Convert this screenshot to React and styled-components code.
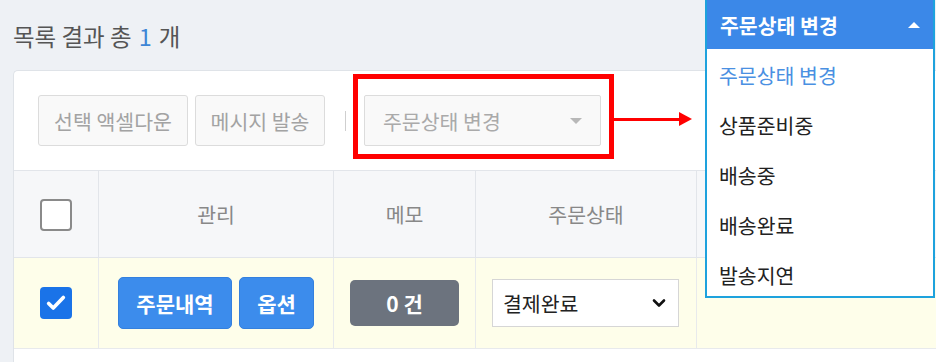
import React from "react";
import styled, { createGlobalStyle } from "styled-components";

const GlobalStyle = createGlobalStyle`
    body {
        margin:0;
        background:#eef1f5;
        font-family:"Noto Sans CJK KR", "Noto Sans", sans-serif;
        overflow:hidden;
    }
`;

const Page = styled.div`
    position:relative;
    width:936px;
    height:362px;
    overflow:hidden;
    padding-left:13px;
    box-sizing:border-box;
`;
const Title = styled.div`
    height:70px;
    display:flex;
    align-items:center;
    padding-top:2px;
    box-sizing:border-box;
    font-size:23.5px;
    color:#555;
`;
const Count = styled.span`
    color:#3d86d6;
    margin:0 7px;
`;
const Card = styled.div`
    width:1000px;
    background:#fff;
    border:1px solid #dfe3e8;
    border-right:none;
    border-radius:5px 0 0 0;
    padding-bottom:40px;
`;
const Toolbar = styled.div`
    display:flex;
    align-items:center;
    gap:7px;
    padding:24px 24px;
`;
const ToolButton = styled.div`
    width:${p => p.$w}px;
    height:51px;
    box-sizing:border-box;
    display:flex;
    align-items:center;
    justify-content:center;
    border:1px solid #dcdcdc;
    border-radius:3px;
    background:#f9f9f9;
    color:#a3a3a3;
    font-size:20.5px;
`;
const Divider = styled.div`
    width:1px;
    height:20px;
    background:#cfcfcf;
    margin:0 11px 0 13px;
`;
const StatusSelect = styled.div`
    width:237px;
    height:51px;
    box-sizing:border-box;
    padding:0 18px;
    display:flex;
    align-items:center;
    justify-content:space-between;
    border:1px solid #dcdcdc;
    border-radius:2px;
    background:#f9f9f9;
    color:#aaa;
    font-size:20.5px;
`;
const Caret = styled.span`
    width:0;
    height:0;
    border-left:6px solid transparent;
    border-right:6px solid transparent;
    border-top:${p => (p.$up ? "none" : "6px solid #b8b8b8")};
    border-bottom:${p => (p.$up ? "6px solid #fff" : "none")};
`;
const Table = styled.table`
    border-collapse:collapse;
    table-layout:fixed;
    width:100%;
`;
const Th = styled.th`
    width:${p => p.$w}px;
    height:86px;
    padding:0;
    background:#f6f7f9;
    border:1px solid #e2e5ea;
    border-left:${p => (p.$first ? "none" : "1px solid #e2e5ea")};
    color:#888;
    font-size:20.5px;
    font-weight:normal;
    text-align:center;
`;
const Td = styled.td`
    height:90px;
    background:#fefeea;
    border:1px solid #e8eaec;
    border-left:${p => (p.$first ? "none" : "1px solid #e8eaec")};
    text-align:center;
    padding:0;
`;
const CheckBox = styled.span`
    display:inline-flex;
    align-items:center;
    justify-content:center;
    width:32px;
    height:32px;
    box-sizing:border-box;
    border-radius:4px;
    border:${p => (p.$checked ? "none" : "2px solid #8a8a8a")};
    background:${p => (p.$checked ? "#1a73e8" : "#fff")};
    vertical-align:middle;
`;
const BlueButton = styled.span`
    display:inline-flex;
    align-items:center;
    justify-content:center;
    width:${p => p.$w}px;
    height:52px;
    box-sizing:border-box;
    border-radius:5px;
    background:#3c8cec;
    border:1px solid #3480de;
    color:#fff;
    font-size:21px;
    font-weight:bold;
    margin-left:${p => (p.$gap ? "7px" : "0")};
`;
const CellInner = styled.div`
    display:flex;
    align-items:center;
    justify-content:${p => p.$align || "center"};
`;
const MemoButton = styled.span`
    display:inline-flex;
    align-items:center;
    justify-content:center;
    width:109px;
    height:46px;
    border-radius:5px;
    background:#6c737e;
    color:#fff;
    font-size:21px;
    font-weight:bold;
`;
const RowSelect = styled.div`
    width:187px;
    height:48px;
    box-sizing:border-box;
    padding:0 12px 0 10px;
    display:flex;
    align-items:center;
    justify-content:space-between;
    background:#fff;
    border:1px solid #d6d6d6;
    color:#222;
    font-size:20.5px;
    margin-left:16px;
`;
const Highlight = styled.div`
    position:absolute;
    left:353px;
    top:74px;
    width:261px;
    height:85px;
    box-sizing:border-box;
    border:5px solid #f00;
`;
const Arrow = styled.div`
    position:absolute;
    left:614px;
    top:118px;
    width:66px;
    height:3px;
    background:#f00;
    &::after {
        content:"";
        position:absolute;
        right:-12px;
        top:-6px;
        border-top:7px solid transparent;
        border-bottom:7px solid transparent;
        border-left:13px solid #f00;
    }
`;
const Dropdown = styled.div`
    position:absolute;
    left:705px;
    top:0;
    width:230px;
    height:298px;
    box-sizing:border-box;
    background:#fff;
    border:2px solid #1ea2dd;
    border-top:none;
`;
const DropHeader = styled.div`
    height:49px;
    background:#3b88e8;
    display:flex;
    align-items:center;
    justify-content:space-between;
    padding:0 13px;
    color:#fff;
    font-size:20.5px;
    font-weight:bold;
`;
const DropItem = styled.div`
    height:50px;
    display:flex;
    align-items:center;
    padding-left:12px;
    padding-top:2px;
    box-sizing:border-box;
    font-size:20.5px;
    color:${p => (p.$active ? "#4a90e2" : "#222")};
`;

const App = () => {
    const items = ["주문상태 변경", "상품준비중", "배송중", "배송완료", "발송지연"];
    return (
        <Page>
            <GlobalStyle />
            <Title>
                목록 결과 총<Count>1</Count>개
            </Title>
            <Card>
                <Toolbar>
                    <ToolButton $w={150}>선택 액셀다운</ToolButton>
                    <ToolButton $w={130}>메시지 발송</ToolButton>
                    <Divider />
                    <StatusSelect>
                        주문상태 변경
                        <Caret />
                    </StatusSelect>
                </Toolbar>
                <Table>
                    <thead>
                        <tr>
                            <Th $w={84} $first>
                                <CheckBox />
                            </Th>
                            <Th $w={234}>관리</Th>
                            <Th $w={141}>메모</Th>
                            <Th $w={220}>주문상태</Th>
                            <Th>&nbsp;</Th>
                        </tr>
                    </thead>
                    <tbody>
                        <tr>
                            <Td $first>
                                <CheckBox $checked>
                                    <svg width="22" height="22" viewBox="0 0 24 24">
                                        <path d="M4 12.5l5 5L20 6" fill="none" stroke="#fff" strokeWidth="4" strokeLinecap="round" strokeLinejoin="round" />
                                    </svg>
                                </CheckBox>
                            </Td>
                            <Td>
                                <CellInner>
                                    <BlueButton $w={114}>주문내역</BlueButton>
                                    <BlueButton $w={75} $gap>옵션</BlueButton>
                                </CellInner>
                            </Td>
                            <Td>
                                <MemoButton>0 건</MemoButton>
                            </Td>
                            <Td>
                                <CellInner $align="flex-start">
                                    <RowSelect>
                                        결제완료
                                        <svg width="14" height="14" viewBox="0 0 14 14">
                                            <path d="M2 4.5l5 5 5-5" fill="none" stroke="#111" strokeWidth="2.6" strokeLinecap="round" strokeLinejoin="round" />
                                        </svg>
                                    </RowSelect>
                                </CellInner>
                            </Td>
                            <Td />
                        </tr>
                    </tbody>
                </Table>
            </Card>
            <Highlight />
            <Arrow />
            <Dropdown>
                <DropHeader>
                    주문상태 변경
                    <Caret $up />
                </DropHeader>
                {items.map((t, i) => (
                    <DropItem key={t} $active={i === 0}>
                        {t}
                    </DropItem>
                ))}
            </Dropdown>
        </Page>
    );
};

export default App;
